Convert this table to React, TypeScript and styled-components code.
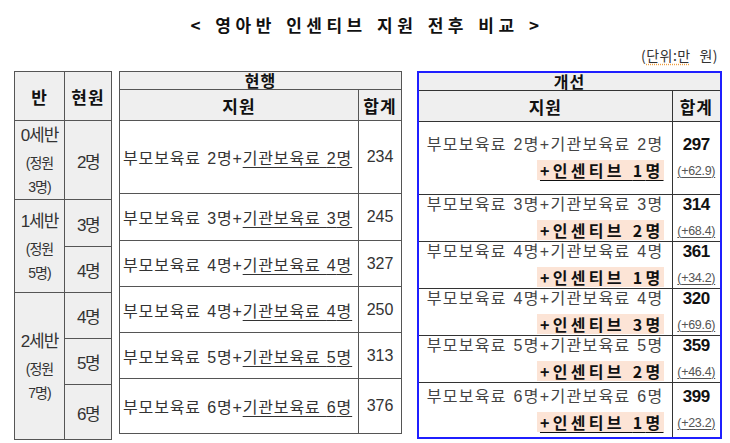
import React from "react";
import styled, { createGlobalStyle } from "styled-components";

const GlobalStyle = createGlobalStyle`
  html, body {
    margin: 0;
    padding: 0;
    background: #ffffff;
  }
  body {
    font-family: "Liberation Sans", "Noto Sans CJK KR", sans-serif;
    color: #222;
  }
`;

const ROW_HEIGHTS = [73, 47, 46, 46, 46, 55];

const current = [
  { count: 2, total: 234 },
  { count: 3, total: 245 },
  { count: 4, total: 327 },
  { count: 4, total: 250 },
  { count: 5, total: 313 },
  { count: 6, total: 376 },
];

const improved = [
  { count: 2, incentive: 1, total: 297, diff: "+62.9", underline: true },
  { count: 3, incentive: 2, total: 314, diff: "+68.4", underline: false },
  { count: 4, incentive: 1, total: 361, diff: "+34.2", underline: false },
  { count: 4, incentive: 3, total: 320, diff: "+69.6", underline: false },
  { count: 5, incentive: 2, total: 359, diff: "+46.4", underline: false },
  { count: 6, incentive: 1, total: 399, diff: "+23.2", underline: true },
];

const classes = [
  { name: "0세반", cap: "3명)", span: 1, start: 0 },
  { name: "1세반", cap: "5명)", span: 2, start: 1 },
  { name: "2세반", cap: "7명)", span: 3, start: 3 },
];

function App() {
  return (
    <>
      <GlobalStyle />
      <Page>
        <Title>&lt; 영아반 인센티브 지원 전후 비교 &gt;</Title>
        <UnitRow>
          <Unit>
            (<Squiggle>단위:만</Squiggle> 원)
          </Unit>
        </UnitRow>

        <TablesRow>
          <Table $width={97} $gap={7}>
            <colgroup>
              <col style={{ width: 50 }} />
              <col style={{ width: 47 }} />
            </colgroup>
            <tbody>
              <tr style={{ height: 49 }}>
                <HeadCell $shade>반</HeadCell>
                <HeadCell $shade>현원</HeadCell>
              </tr>
              {current.map((row, i) => {
                const cls = classes.find((c) => c.start === i);
                return (
                  <tr key={i} style={{ height: ROW_HEIGHTS[i] }}>
                    {cls && (
                      <ClassCell rowSpan={cls.span}>
                        <ClassName>{cls.name}</ClassName>
                        <ClassCap>(정원</ClassCap>
                        <ClassCap>{cls.cap}</ClassCap>
                      </ClassCell>
                    )}
                    <CountCell>{row.count}명</CountCell>
                  </tr>
                );
              })}
            </tbody>
          </Table>

          <Table $width={282} $gap={15}>
            <colgroup>
              <col style={{ width: 239 }} />
              <col style={{ width: 43 }} />
            </colgroup>
            <tbody>
              <tr style={{ height: 18 }}>
                <GroupCell colSpan={2}>현행</GroupCell>
              </tr>
              <tr style={{ height: 31 }}>
                <HeadCell $shade>지원</HeadCell>
                <HeadCell $shade>합계</HeadCell>
              </tr>
              {current.map((row, i) => (
                <tr key={i} style={{ height: ROW_HEIGHTS[i] }}>
                  <SupportCell>
                    부모보육료 {row.count}명+<Under>기관보육료 {row.count}명</Under>
                  </SupportCell>
                  <NumCell>{row.total}</NumCell>
                </tr>
              ))}
            </tbody>
          </Table>

          <Table $width={303} $gap={0} $blue>
            <colgroup>
              <col style={{ width: 254 }} />
              <col style={{ width: 49 }} />
            </colgroup>
            <tbody>
              <tr style={{ height: 18 }}>
                <GroupCell colSpan={2}>개선</GroupCell>
              </tr>
              <tr style={{ height: 31 }}>
                <HeadCell $shade>지원</HeadCell>
                <HeadCell $shade>합계</HeadCell>
              </tr>
              {improved.map((row, i) => (
                <tr key={i} style={{ height: ROW_HEIGHTS[i] }}>
                  <NewSupportCell>
                    <TwoLines>
                      <Line>
                        부모보육료 {row.count}명+기관보육료 {row.count}명
                      </Line>
                      <Line>
                        <Incentive $underline={row.underline}>
                          +인센티브 {row.incentive}명
                        </Incentive>
                      </Line>
                    </TwoLines>
                  </NewSupportCell>
                  <TotalCell>
                    <TwoLines>
                      <Total>{row.total}</Total>
                      <Diff>({row.diff})</Diff>
                    </TwoLines>
                  </TotalCell>
                </tr>
              ))}
            </tbody>
          </Table>
        </TablesRow>
      </Page>
    </>
  );
}

export default App;

const Page = styled.div`
  width: 730px;
  height: 443px;
  overflow: hidden;
  box-sizing: border-box;
  padding-top: 13px;
`;

const Title = styled.h1`
  margin: 0;
  text-align: center;
  font-family: "Noto Sans CJK KR", sans-serif;
  font-size: 17px;
  line-height: 24px;
  font-weight: 700;
  letter-spacing: 4.5px;
  word-spacing: 2px;
  color: #111;
  padding-left: 4px;
`;

const UnitRow = styled.div`
  display: flex;
  justify-content: flex-end;
  padding-right: 12px;
  margin-top: 8px;
  height: 26px;
`;

const Unit = styled.span`
  font-family: "Noto Sans CJK KR", sans-serif;
  font-size: 14px;
  line-height: 20px;
  color: #333;
  letter-spacing: 0.5px;
  word-spacing: 5px;
`;

const Squiggle = styled.span`
  text-decoration: underline dotted #f0a040;
  text-underline-offset: 3px;
`;

const TablesRow = styled.div`
  display: flex;
  align-items: flex-start;
  padding-left: 14px;
`;

const Table = styled.table<{ $width: number; $gap: number; $blue?: boolean }>`
  width: ${({ $width }) => $width}px;
  margin-right: ${({ $gap }) => $gap}px;
  table-layout: fixed;
  border-collapse: collapse;
  border: ${({ $blue }) => ($blue ? "2px solid #1f1fff" : "1px solid #555")};
  flex-shrink: 0;

  td {
    border: 1px solid ${({ $blue }) => ($blue ? "#333" : "#555")};
    padding: 0;
  }
`;

const HeadCell = styled.td<{ $shade?: boolean }>`
  background: ${({ $shade }) => ($shade ? "#efefef" : "#fff")};
  text-align: center;
  vertical-align: middle;
  font-family: "Noto Sans CJK KR", sans-serif;
  font-weight: 700;
  font-size: 17px;
  letter-spacing: 1px;
  color: #111;
`;

const GroupCell = styled.td`
  background: #efefef;
  text-align: center;
  vertical-align: middle;
  font-family: "Noto Sans CJK KR", sans-serif;
  font-weight: 700;
  font-size: 16px;
  line-height: 17px;
  letter-spacing: 1px;
  color: #111;
`;

const ClassCell = styled.td`
  background: #efefef;
  text-align: center;
  vertical-align: middle;
  color: #333;
`;

const ClassName = styled.div`
  font-size: 17px;
  line-height: 30px;
  letter-spacing: -1px;
`;

const ClassCap = styled.div`
  font-size: 14px;
  line-height: 24px;
  letter-spacing: -1px;
`;

const CountCell = styled.td`
  background: #efefef;
  text-align: center;
  vertical-align: middle;
  font-size: 17px;
  letter-spacing: -1.5px;
  color: #333;
`;

const SupportCell = styled.td`
  padding-left: 3px !important;
  vertical-align: middle;
  font-size: 16px;
  letter-spacing: 0.85px;
  word-spacing: 1px;
  white-space: nowrap;
  color: #333;
`;

const Under = styled.span`
  text-decoration: underline;
  text-underline-offset: 3px;
  text-decoration-thickness: 1px;
`;

const NumCell = styled.td`
  text-align: center;
  vertical-align: middle;
  font-size: 16px;
  color: #333;
`;

const NewSupportCell = styled.td`
  vertical-align: middle;
  text-align: right;
  padding-right: 8px !important;
  white-space: nowrap;
`;

const TwoLines = styled.div`
  height: 54px;
  margin: -4px 0;
  display: flex;
  flex-direction: column;
`;

const Line = styled.div`
  height: 27px;
  line-height: 27px;
  font-size: 16px;
  letter-spacing: 1.3px;
  word-spacing: 1px;
  color: #444;
`;

const Incentive = styled.span<{ $underline: boolean }>`
  background: #fce4d6;
  font-family: "Noto Sans CJK KR", sans-serif;
  font-weight: 700;
  font-size: 16px;
  line-height: 20px;
  display: inline-block;
  letter-spacing: 3.3px;
  color: #111;
  padding: 0 0 0 3px;
  text-decoration: ${({ $underline }) => ($underline ? "underline" : "none")};
  text-underline-offset: 3px;
`;

const TotalCell = styled.td`
  text-align: center;
  vertical-align: middle;
`;

const Total = styled.div`
  height: 27px;
  line-height: 27px;
  font-size: 17px;
  font-weight: 700;
  letter-spacing: -0.5px;
  color: #111;
`;

const Diff = styled.div`
  height: 27px;
  line-height: 27px;
  font-size: 12.5px;
  letter-spacing: -0.3px;
  color: #555;
  text-decoration: underline;
  text-underline-offset: 2px;
`;
